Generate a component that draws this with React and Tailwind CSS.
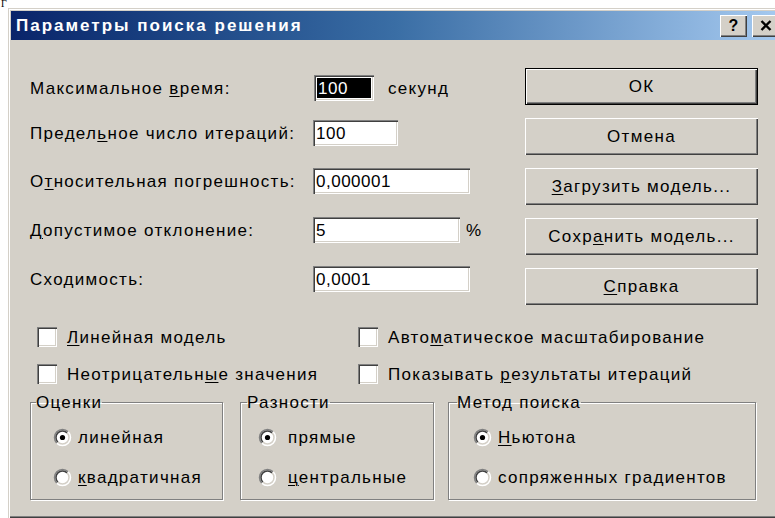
import React from "react";

const U = ({ children }) => <span className="underline underline-offset-2 decoration-1">{children}</span>;

function Radio({ checked }) {
  return (
    <svg width="19" height="19" viewBox="0 0 19 19" className="shrink-0">
      <circle cx="9.5" cy="9.5" r="8" fill="#ffffff" />
      <path d="M3.84 15.16 A8 8 0 0 1 15.16 3.84" stroke="#808080" strokeWidth="1.5" fill="none" />
      <path d="M4.9 14.1 A6.5 6.5 0 0 1 14.1 4.9" stroke="#404040" strokeWidth="1.5" fill="none" />
      <path d="M15.16 3.84 A8 8 0 0 1 3.84 15.16" stroke="#ffffff" strokeWidth="1.5" fill="none" />
      <path d="M14.1 4.9 A6.5 6.5 0 0 1 4.9 14.1" stroke="#d4d0c8" strokeWidth="1.5" fill="none" />
      {checked && <circle cx="9.5" cy="9.5" r="2.6" fill="#000000" />}
    </svg>
  );
}

function Check() {
  return (
    <div className="w-[20px] h-[20px] shrink-0 bg-white shadow-[inset_1px_1px_0_#808080,inset_2px_2px_0_#404040,inset_-1px_-1px_0_#ffffff,inset_-2px_-2px_0_#d4d0c8]" />
  );
}

function Button({ children, isDefault }) {
  if (isDefault) {
    return (
      <div className="h-[37px] w-[233px] border border-black">
        <div className="h-full w-full flex items-center justify-center bg-[#d4d0c8] shadow-[inset_1px_1px_0_#ffffff,inset_-1px_-1px_0_#404040,inset_-2px_-2px_0_#808080]">
          {children}
        </div>
      </div>
    );
  }
  return (
    <div className="h-[37px] w-[233px] flex items-center justify-center bg-[#d4d0c8] shadow-[inset_1px_1px_0_#ffffff,inset_-1px_-1px_0_#404040,inset_-2px_-2px_0_#808080]">
      {children}
    </div>
  );
}

const sunken =
  "h-[26px] bg-white flex items-center pl-[3px] shadow-[inset_1px_1px_0_#808080,inset_2px_2px_0_#404040,inset_-1px_-1px_0_#ffffff,inset_-2px_-2px_0_#d4d0c8]";

export default function App() {
  return (
    <div className="relative w-[775px] h-[518px] overflow-hidden bg-white text-black text-[17px] leading-[19px] tracking-[1.3px] font-['Liberation_Sans',Arial,sans-serif]">
      {/* scrap of the page text above the dialog */}
      <div className="h-[8px] pl-[1px] font-['Liberation_Serif',serif] text-[10px] leading-[8px] tracking-normal">Г</div>

      {/* dialog window */}
      <div className="ml-[8px] w-[776px] h-[510px] p-[3px] bg-[#d4d0c8] shadow-[inset_1px_1px_0_#d4d0c8,inset_2px_2px_0_#ffffff,inset_-1px_-1px_0_#404040,inset_-2px_-2px_0_#808080]">
        {/* caption */}
        <div className="h-[29px] flex items-center pl-[5px] pr-[2px] bg-gradient-to-r from-[#0a246a] via-[#3a6ea5] to-[#a6caf0]">
          <span className="flex-1 text-white font-bold text-[17px] tracking-[2px]">Параметры поиска решения</span>
          <div className="w-[27px] h-[22px] flex items-center justify-center bg-[#d4d0c8] font-bold text-[16px] tracking-normal shadow-[inset_1px_1px_0_#ffffff,inset_-1px_-1px_0_#404040,inset_-2px_-2px_0_#808080]">?</div>
          <div className="ml-[5px] w-[27px] h-[22px] flex items-center justify-center bg-[#d4d0c8] shadow-[inset_1px_1px_0_#ffffff,inset_-1px_-1px_0_#404040,inset_-2px_-2px_0_#808080]">
            <svg width="12" height="11" viewBox="0 0 12 11">
              <path d="M1.5 1 L10.5 10 M10.5 1 L1.5 10" stroke="#000" strokeWidth="2.4" />
            </svg>
          </div>
        </div>

        {/* dialog body */}
        <div className="pl-[19px]">
          <div className="flex">
            {/* option fields */}
            <div className="w-[495px] flex flex-col pt-[35px]">
              <div className="flex items-center h-[26px]">
                <span className="w-[284px]">Максимальное <U>в</U>ремя:</span>
                <div className="w-[60px] h-[26px] p-[3px] bg-white shadow-[inset_1px_1px_0_#808080,inset_2px_2px_0_#404040,inset_-1px_-1px_0_#ffffff,inset_-2px_-2px_0_#d4d0c8]">
                  <div className="h-full bg-black text-white flex items-center pl-[1px] tracking-[0.5px]">100</div>
                </div>
                <span className="ml-[14px]">секунд</span>
              </div>
              <div className="flex items-center h-[26px] mt-[19px]">
                <span className="w-[283px]">Предел<U>ь</U>ное число итераций:</span>
                <div className={`${sunken} w-[85px] tracking-[0.5px]`}>100</div>
              </div>
              <div className="flex items-center h-[26px] mt-[22px]">
                <span className="w-[283px]">О<U>т</U>носительная погрешность:</span>
                <div className={`${sunken} w-[157px] tracking-[0.5px]`}>0,000001</div>
              </div>
              <div className="flex items-center h-[26px] mt-[23px]">
                <span className="w-[283px]"><U>Д</U>опустимое отклонение:</span>
                <div className={`${sunken} w-[147px]`}>5</div>
                <span className="ml-[6px]">%</span>
              </div>
              <div className="flex items-center h-[26px] mt-[23px]">
                <span className="w-[283px]">Сходимость:</span>
                <div className={`${sunken} w-[157px] tracking-[0.5px]`}>0,0001</div>
              </div>
            </div>

            {/* command buttons */}
            <div className="flex flex-col gap-[13px] pt-[28px]">
              <Button isDefault>ОК</Button>
              <Button>Отмена</Button>
              <Button><U>З</U>агрузить модель...</Button>
              <Button>Сохр<U>а</U>нить модель...</Button>
              <Button><U>С</U>правка</Button>
            </div>
          </div>

          {/* check boxes */}
          <div className="pl-[7px] mt-[21px]">
            <div className="flex h-[22px] items-center">
              <div className="w-[321px] flex items-center gap-[10px]">
                <Check />
                <span><U>Л</U>инейная модель</span>
              </div>
              <div className="flex items-center gap-[10px]">
                <Check />
                <span>Авто<U>м</U>атическое масштабирование</span>
              </div>
            </div>
            <div className="flex h-[22px] items-center mt-[15px]">
              <div className="w-[321px] flex items-center gap-[10px]">
                <Check />
                <span>Неотрицательн<U>ы</U>е значения</span>
              </div>
              <div className="flex items-center gap-[10px]">
                <Check />
                <span>Показывать <U>р</U>езультаты итераций</span>
              </div>
            </div>
          </div>

          {/* option groups */}
          <div className="flex mt-[8px]">
            <fieldset className="w-[193px] h-[107px] border border-[#808080] shadow-[1px_1px_0_#ffffff,inset_1px_1px_0_#ffffff]">
              <legend className="ml-[5px]">Оценки</legend>
              <div className="pl-[22px] pt-[16px] flex flex-col gap-[21px]">
                <div className="flex items-center h-[19px] gap-[6px]"><Radio checked /><span>линейная</span></div>
                <div className="flex items-center h-[19px] gap-[6px]"><Radio /><span><U>к</U>вадратичная</span></div>
              </div>
            </fieldset>
            <fieldset className="ml-[17px] w-[194px] h-[107px] border border-[#808080] shadow-[1px_1px_0_#ffffff,inset_1px_1px_0_#ffffff]">
              <legend className="ml-[6px]">Разности</legend>
              <div className="pl-[17px] pt-[16px] flex flex-col gap-[21px]">
                <div className="flex items-center h-[19px] gap-[11px]"><Radio checked /><span>прямые</span></div>
                <div className="flex items-center h-[19px] gap-[11px]"><Radio /><span><U>ц</U>ентральные</span></div>
              </div>
            </fieldset>
            <fieldset className="ml-[14px] w-[308px] h-[107px] border border-[#808080] shadow-[1px_1px_0_#ffffff,inset_1px_1px_0_#ffffff]">
              <legend className="ml-[8px]">Метод поиска</legend>
              <div className="pl-[24px] pt-[16px] flex flex-col gap-[21px]">
                <div className="flex items-center h-[19px] gap-[6px]"><Radio checked /><span><U>Н</U>ьютона</span></div>
                <div className="flex items-center h-[19px] gap-[6px]"><Radio /><span>сопряженных градиентов</span></div>
              </div>
            </fieldset>
          </div>
        </div>
      </div>
    </div>
  );
}
